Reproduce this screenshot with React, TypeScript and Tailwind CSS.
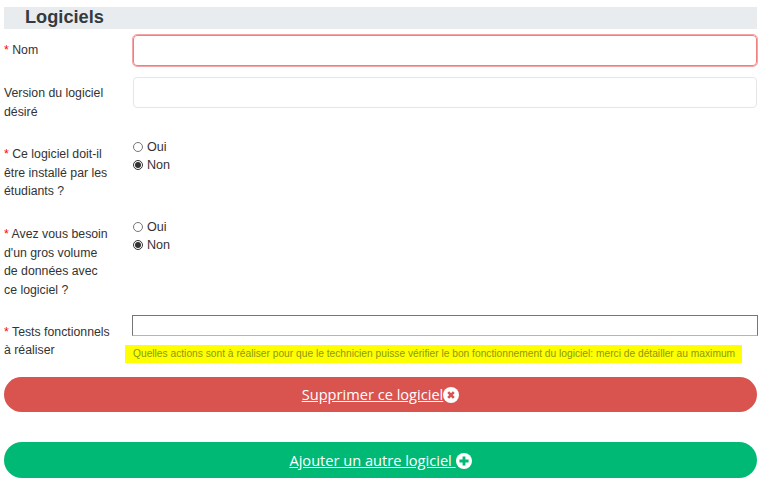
function Required() {
  return <span className="text-[#ff0000]">* </span>
}

function RadioGroup({ name }: { name: string }) {
  return (
    <div className="flex flex-col text-[12.6px] leading-[18px] text-[#333]">
      <label className="flex items-center h-[18px]">
        <input type="radio" name={name} className="m-0 mr-[4px] w-[10px] h-[10px] accent-[#333]" />
        Oui
      </label>
      <label className="flex items-center h-[18px]">
        <input type="radio" name={name} defaultChecked className="m-0 mr-[4px] w-[10px] h-[10px] accent-[#333]" />
        Non
      </label>
    </div>
  )
}

export default function App() {
  return (
    <div className="w-[765px] h-[483px] overflow-hidden bg-white pt-[7px] pl-[4px] pr-[8px] font-['Liberation_Sans',Arial,sans-serif] text-[#333]">
      <h2 className="h-[22px] bg-[#e9ecef] pl-[21px] text-[18.2px] leading-[20px] font-bold text-[#343a40]">Logiciels</h2>

      <div className="flex mt-[6px] h-[31px]">
        <div className="w-[129px] text-[12.3px] leading-[19px] pt-[6px]">
          <Required />Nom
        </div>
        <input className="flex-1 h-[31px] rounded-[4px] border border-[#f08080] outline outline-1 outline-[#f5a5a5] bg-white" />
      </div>

      <div className="flex mt-[11px] h-[61px]">
        <div className="w-[129px] text-[12.3px] leading-[19px] pt-[7px]">Version du logiciel désiré</div>
        <input className="flex-1 h-[31px] rounded-[4px] border border-[#e6e6e6] bg-white" />
      </div>

      <div className="flex mt-[6px] h-[80px]">
        <div className="w-[129px] pr-[22px] text-[12.3px] leading-[18.5px] pt-[1px]">
          <Required />Ce logiciel doit-il être installé par les étudiants ?
        </div>
        <div className="-mt-[6px]">
          <RadioGroup name="etudiants" />
        </div>
      </div>

      <div className="flex h-[89px]">
        <div className="w-[129px] pr-[22px] text-[12.3px] leading-[18.5px] pt-[1px]">
          <Required />Avez vous besoin d'un gros volume de données avec ce logiciel ?
        </div>
        <div className="-mt-[6px]">
          <RadioGroup name="volume" />
        </div>
      </div>

      <div className="flex h-[30px] mt-[2px]">
        <div className="w-[128px] pr-[16px] text-[12.3px] leading-[18px] pt-[8px]">
          <Required />Tests fonctionnels à réaliser
        </div>
        <div className="flex-1 -mr-[1px]">
          <input className="block w-full h-[21px] border border-[#767676] border-b-[#b5b5b5] bg-white" />
        </div>
      </div>

      <div className="ml-[121px] w-[617px] h-[18px] bg-[#ffff00] pl-[8px] text-[10.22px] leading-[17px] whitespace-nowrap text-[#8a9a10]">
        Quelles actions sont à réaliser pour que le technicien puisse vérifier le bon fonctionnement du logiciel: merci de détailler au maximum
      </div>

      <a className="mt-[14px] flex h-[35px] items-center justify-center rounded-full bg-[#d9534f] font-['Open_Sans',sans-serif] text-[14.6px] text-white">
        <span className="underline">Supprimer ce logiciel</span>
        <svg viewBox="0 0 16 16" className="w-[16px] h-[16px] shrink-0">
          <circle cx="8" cy="8" r="8" fill="#fff" />
          <path d="M5.2 5.2l5.6 5.6M10.8 5.2l-5.6 5.6" stroke="#d9534f" strokeWidth="2.6" />
        </svg>
      </a>

      <a className="mt-[30px] flex h-[36px] items-center justify-center rounded-full bg-[#00b975] pt-[1px] font-['Open_Sans',sans-serif] text-[14.6px] text-white">
        <span className="underline whitespace-pre">Ajouter un autre logiciel </span>
        <svg viewBox="0 0 16 16" className="w-[16px] h-[16px] shrink-0">
          <circle cx="8" cy="8" r="8" fill="#fff" />
          <path d="M8 3.4v9.2M3.4 8h9.2" stroke="#00b975" strokeWidth="2.8" />
        </svg>
      </a>
    </div>
  )
}
